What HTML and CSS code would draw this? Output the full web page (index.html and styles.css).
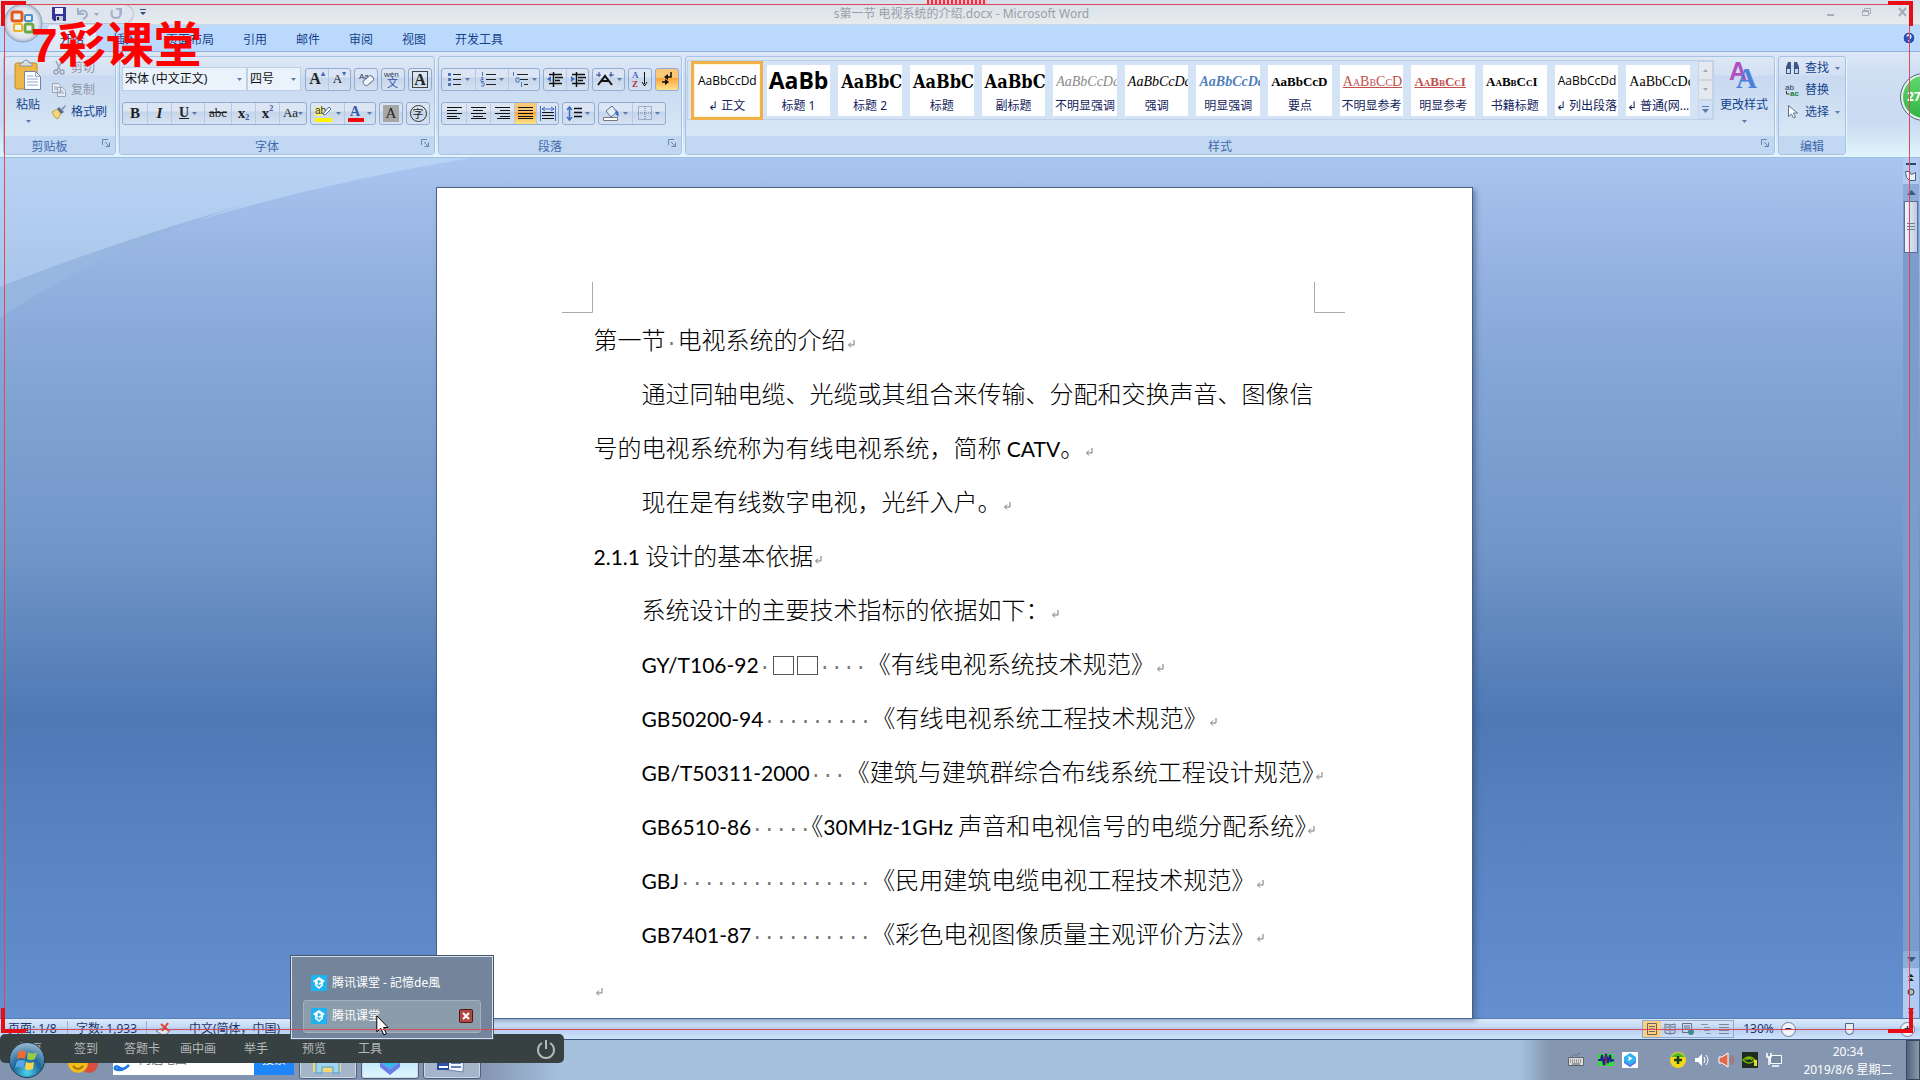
FILE: index.html
```html
<!DOCTYPE html>
<html lang="zh-CN">
<head>
<meta charset="utf-8">
<title>s第一节 电视系统的介绍.docx - Microsoft Word</title>
<link rel="stylesheet" href="styles.css">
</head>
<body>
<svg class="defs" width="0" height="0" aria-hidden="true">
  <defs>
    <symbol id="ret" viewBox="0 0 8 9"><path d="M7 0v5H2M4 2.500L1.500 5L4 7.500" fill="none" stroke="#777" stroke-width="1"/></symbol>
    <symbol id="down" viewBox="0 0 5 3"><path d="M0 0h5L2.500 3z" fill="#5b7ba8"/></symbol>
    <symbol id="launch" viewBox="0 0 8 8"><path d="M.5 6V.5H6M3 3l4 4M7.500 3.500v4h-4" fill="none" stroke="#6685b0"/></symbol>
    <symbol id="ke" viewBox="0 0 16 16"><path d="M0 0h16v16H0z" fill="#20b3f2"/><path d="M8 2l6 4-2 1.500v3L8 14l-4-3.500v-3L2 6z" fill="#fff"/><path d="M7 5l3 1.700L7 8.500zM5.500 9.500L8 11.500l2.500-2" fill="#20b3f2" stroke="#20b3f2" stroke-width=".6"/></symbol>
  </defs>
</svg>

<header class="title">
  <div class="qat">
    <button aria-label="保存"><svg width="14" height="14"><path d="M0 0h14v14H2L0 12z" fill="#35349b"/><path d="M3 1h8v6H3z" fill="#eef"/><path d="M4 9h7v5H4z" fill="#c8c8dc"/><path d="M5 10h2v3H5z" fill="#223"/></svg></button>
    <button aria-label="撤消"><svg width="24" height="14"><path d="M2 1v6h6M2 7q5-6 8-2t-3 7" fill="none" stroke="#a2b0c8" stroke-width="2"/><path d="M18 6h5l-2.500 3z" fill="#9aa7bd"/></svg></button>
    <button aria-label="恢复"><svg width="12" height="14"><path d="M2 3q-2 8 4 8t4-8M6 2h5v5" fill="none" stroke="#a2b0c8" stroke-width="2"/></svg></button>
  </div>
  <button class="qmore" aria-label="自定义快速访问工具栏"><svg width="6" height="6"><path d="M0 0h6v1H0zM0 3h6L3 6z" fill="#35507c"/></svg></button>
  <h1>s第一节 电视系统的介绍.docx - Microsoft Word</h1>
  <div class="wins">
    <button aria-label="最小化"><svg width="8" height="8"><path d="M0 6h7v2H0z" fill="#a4adb8"/></svg></button>
    <button aria-label="还原"><svg width="9" height="8"><path d="M2.500 2V.5h6v5H7M.5 2.500h6v5h-6zM.5 3.500h6" fill="none" stroke="#a4adb8"/></svg></button>
    <button aria-label="关闭"><svg width="9" height="9"><path d="M1 0l7 8M8 0L1 8" stroke="#a4adb8" stroke-width="2"/></svg></button>
  </div>
</header>

<nav class="tabs">
  <a href="#" class="on">开始</a><a href="#">插入</a><a href="#">页面布局</a><a href="#">引用</a><a href="#">邮件</a><a href="#">审阅</a><a href="#">视图</a><a href="#">开发工具</a>
  <button class="help" aria-label="帮助"><svg width="14" height="14"><circle cx="7" cy="7" r="6" fill="#2b52bd" stroke="#e7f0fc" stroke-width="1"/><path d="M5 5.500Q5 4 7 4t2 1.500T7 8M7 9v1.500" stroke="#fff" fill="none" stroke-width="1.300"/></svg></button>
</nav>

<section class="ribbon">
  <div class="group clip">
    <div class="body">
      <button class="big"><svg width="28" height="31"><rect x="1" y="3" width="22" height="26" rx="2" fill="#efb545" stroke="#c18b2c"/><path d="M6 5V3h3q0-3 3-3t3 3h3v3H6z" fill="#d9dee4" stroke="#7b8696" stroke-width=".8"/><path d="M10.500 11.500h11l5 5v13h-16z" fill="#fff" stroke="#6a84b0"/><path d="M21.500 11.500v5h5M13 16h6M13 19h11M13 22h11M13 25h11" stroke="#8ba6d0" fill="none"/></svg><span>粘贴</span><svg class="dn"><use href="#down"/></svg></button>
      <div class="stack">
        <button class="dim"><svg width="14" height="14"><path d="M4 0l4 9M10 0L5 9" stroke="#9aa5b8" stroke-width="1.500"/><circle cx="4" cy="11" r="2" fill="none" stroke="#9aa5b8" stroke-width="1.500"/><circle cx="10" cy="11" r="2" fill="none" stroke="#9aa5b8" stroke-width="1.500"/></svg>剪切</button>
        <button class="dim"><svg width="14" height="14"><path d="M.5.5h6l2 2v7h-8zM5.500 4.500h5l3 3v6h-8z" fill="#e6ebf3" stroke="#98a5bb"/><path d="M2 4h3M2 6h3M7 8h4M7 10h5" stroke="#98a5bb"/></svg>复制</button>
        <button><svg width="14" height="14"><path d="M0 7l5-3 4 4-3 6q-4-1-6-7z" fill="#f3d775" stroke="#b49435" stroke-width=".8"/><path d="M5 4l2-2 5 5-3 2z" fill="#5d6c8c"/><path d="M9 4l4-4 1 1-3 4z" fill="#8796b4"/></svg>格式刷</button>
      </div>
    </div>
    <h2>剪贴板</h2><button class="launch" aria-label="剪贴板选项"><svg width="8" height="8"><use href="#launch"/></svg></button>
  </div>

  <div class="group font">
    <div class="body rows">
      <div class="row">
        <span class="combo"><select class="face" aria-label="字体"><option>宋体 (中文正文)</option></select><svg class="dn"><use href="#down"/></svg></span><span class="combo"><select class="size" aria-label="字号"><option>四号</option></select><svg class="dn"><use href="#down"/></svg></span>
        <div class="box sp"><button class="w22 ser l">A<i class="up">▴</i></button><button class="w22 ser">A<i class="up">▾</i></button></div>
        <div class="box"><button class="w22" aria-label="清除格式"><svg width="16" height="16"><text x="1" y="8" class="t8">Aa</text><rect x="5" y="7" width="11" height="6" rx="2" transform="rotate(-40 10 10)" fill="#f2f4f8" stroke="#6d7d9c"/></svg></button></div>
        <div class="box"><button class="w22" aria-label="拼音指南"><svg width="18" height="18"><text x="0" y="7" class="t8">wén</text><text x="3" y="17" class="t11">文</text></svg></button></div>
        <div class="box"><button class="w22 ser l"><span class="frame">A</span></button></div>
      </div>
      <div class="row">
        <div class="box"><button class="w24 ser b">B</button><button class="w24 ser it">I</button><button class="w34 ser un"><u>U</u><svg class="dn"><use href="#down"/></svg></button><button class="w26 ser"><s>abc</s></button><button class="w24 ser b">x<sub>2</sub></button><button class="w24 ser b">x<sup>2</sup></button><button class="w26 ser">Aa<svg class="dn"><use href="#down"/></svg></button></div>
        <div class="box"><button class="w34" aria-label="突出显示"><svg width="18" height="17"><path d="M0 2h8v9H0z" fill="#f6f178"/><text x="0" y="9" class="t10">ab</text><path d="M8 9l6-7 2 2-6 6z" fill="#fff" stroke="#58719f"/><path d="M0 13h17v4H0z" fill="#fff500"/></svg><svg class="dn"><use href="#down"/></svg></button><button class="w30" aria-label="字体颜色"><svg width="16" height="17"><text x="2" y="11" class="ta">A</text><path d="M0 13h16v4H0z" fill="#f00b0b"/></svg><svg class="dn"><use href="#down"/></svg></button></div>
        <div class="box"><button class="w22 ser"><span class="shade">A</span></button></div>
        <div class="box"><button class="w22"><span class="ring">字</span></button></div>
      </div>
    </div>
    <h2>字体</h2><button class="launch" aria-label="字体选项"><svg width="8" height="8"><use href="#launch"/></svg></button>
  </div>

  <div class="group para">
    <div class="body rows">
      <div class="row">
        <div class="box">
          <button class="w34" aria-label="项目符号"><svg width="14" height="14"><path d="M5 2.500h8M5 7.500h8M5 12.500h8" stroke="#222"/><path d="M0 1h3v3H0zM0 6h3v3H0zM0 11h3v3H0z" fill="#4f76b8"/></svg><svg class="dn"><use href="#down"/></svg></button>
          <button class="w34" aria-label="编号"><svg width="15" height="14"><path d="M5 2.500h10M5 7.500h10M5 12.500h10" stroke="#222"/><path d="M1.500 0v4M0 5.500h2v2H0v2h3M0 11h3v3H0" fill="none" stroke="#4f76b8"/></svg><svg class="dn"><use href="#down"/></svg></button>
          <button class="w30" aria-label="多级列表"><svg width="17" height="15"><path d="M5 2.500h11M8 7.500h8M12 12.500h4" stroke="#222"/><path d="M1.500 0v4M4 6h3v4H4zM9.500 10v5" fill="none" stroke="#4f76b8"/></svg><svg class="dn"><use href="#down"/></svg></button>
        </div>
        <div class="box">
          <button class="w22" aria-label="减少缩进"><svg width="16" height="15"><path d="M2 2.500h13M8 5.500h8M8 8.500h5M2 11.500h13M6.500 0v15" stroke="#111" stroke-width="1.500"/><path d="M0 7l4-3v6z" fill="#3f6cc4"/></svg></button>
          <button class="w22" aria-label="增加缩进"><svg width="16" height="15"><path d="M2 2.500h13M8 5.500h8M8 8.500h5M2 11.500h13M6.500 0v15" stroke="#111" stroke-width="1.500"/><path d="M5 7L1 4v6z" fill="#3f6cc4"/></svg></button>
        </div>
        <div class="box"><button class="w30" aria-label="中文版式"><svg width="18" height="14"><path d="M2 13l7-9 7 9M5 9h8" fill="none" stroke="#111" stroke-width="2"/><path d="M0 3h5M13 3h5M3 0v5M15 0v5" stroke="#23409a"/></svg><svg class="dn"><use href="#down"/></svg></button></div>
        <div class="box"><button class="w22" aria-label="排序"><svg width="16" height="16"><text x="0" y="7" class="t9">A</text><text x="0" y="16" class="t9 r">Z</text><path d="M12.500 1v12M10 11l2.500 4 2.500-4" stroke="#111" fill="none"/></svg></button></div>
        <div class="box hot"><button class="w22" aria-label="显示编辑标记"><svg width="12" height="14"><path d="M10 0v5H5M1 10h6" stroke="#111" fill="none" stroke-width="1.500"/><path d="M3 5l4-3v6zM8 10L4 7v6z" fill="#111"/></svg></button></div>
      </div>
      <div class="row">
        <div class="box">
          <button class="w24" aria-label="左对齐"><svg width="15" height="12"><path d="M0 .5h15M0 3.500h10M0 6.500h15M0 9.500h10M0 11.500h13" stroke="#111"/></svg></button>
          <button class="w24" aria-label="居中"><svg width="15" height="12"><path d="M0 .5h15M2 3.500h10M0 6.500h15M2 9.500h10M0 11.500h15" stroke="#111"/></svg></button>
          <button class="w24" aria-label="右对齐"><svg width="15" height="12"><path d="M0 .5h15M5 3.500h10M0 6.500h15M5 9.500h10M2 11.500h13" stroke="#111"/></svg></button>
          <button class="w22 on" aria-label="两端对齐"><svg width="15" height="12"><path d="M0 .5h15M0 3.500h15M0 6.500h15M0 9.500h15M0 11.500h15" stroke="#111"/></svg></button>
          <button class="w22" aria-label="分散对齐"><svg width="16" height="15"><path d="M2 6.500h12M2 9.500h12M2 12.500h12" stroke="#111"/><path d="M.5 0v15M15.500 0v15M2 3h12M5 1L2 3l3 2M11 1l3 2-3 2" stroke="#3f6cc4" fill="none"/></svg></button>
        </div>
        <div class="box"><button class="w30" aria-label="行距"><svg width="15" height="15"><path d="M7 2.500h8M7 6.500h8M7 10.500h8" stroke="#111" stroke-width="1.500"/><path d="M2.500 2v11M0 4l2.500-3L5 4M0 11l2.500 3L5 11" stroke="#3f6cc4" fill="none" stroke-width="1.500"/></svg><svg class="dn"><use href="#down"/></svg></button></div>
        <div class="box">
          <button class="w34" aria-label="底纹"><svg width="17" height="16"><path d="M3 6l6-5 5 6-6 5z" fill="#e9eef7" stroke="#5c6f91"/><path d="M13 5q4 2 2 7l-3-4z" fill="#3f6cc4"/><path d="M.5 12.500h14v3H.5z" fill="#fff" stroke="#777"/></svg><svg class="dn"><use href="#down"/></svg></button>
          <button class="w34" aria-label="边框"><svg width="14" height="14"><path d="M.5.5h13v13H.5zM7 0v14M0 7h14" fill="none" stroke="#6a7b98" stroke-dasharray="1 1"/></svg><svg class="dn"><use href="#down"/></svg></button>
        </div>
      </div>
    </div>
    <h2>段落</h2><button class="launch" aria-label="段落选项"><svg width="8" height="8"><use href="#launch"/></svg></button>
  </div>

  <div class="group styles">
    <div class="body">
      <div class="gallery">
        <button class="tile sel"><b class="s-n">AaBbCcDd</b><span>↲ 正文</span></button>
        <button class="tile"><b class="s-h1">AaBb</b><span>标题 1</span></button>
        <button class="tile"><b class="s-h2">AaBbC</b><span>标题 2</span></button>
        <button class="tile"><b class="s-h2">AaBbC</b><span>标题</span></button>
        <button class="tile"><b class="s-h2">AaBbC</b><span>副标题</span></button>
        <button class="tile"><b class="s-i gray">AaBbCcDd</b><span>不明显强调</span></button>
        <button class="tile"><b class="s-i">AaBbCcDd</b><span>强调</span></button>
        <button class="tile"><b class="s-i blue">AaBbCcDd</b><span>明显强调</span></button>
        <button class="tile"><b class="s-b">AaBbCcD</b><span>要点</span></button>
        <button class="tile"><b class="s-c red">AaBbCcD</b><span>不明显参考</span></button>
        <button class="tile"><b class="s-c red bold">AaBbCcI</b><span>明显参考</span></button>
        <button class="tile"><b class="s-c bold">AaBbCcI</b><span>书籍标题</span></button>
        <button class="tile"><b class="s-n">AaBbCcDd</b><span>↲ 列出段落</span></button>
        <button class="tile"><b class="s-s">AaBbCcDd</b><span>↲ 普通(网...</span></button>
        <div class="gscroll"><button aria-label="上一行"><svg width="5" height="3"><path d="M0 3h5L2.500 0z" fill="#9aa9c0"/></svg></button><button aria-label="下一行"><svg width="5" height="3"><path d="M0 0h5L2.500 3z" fill="#9aa9c0"/></svg></button><button class="lit" aria-label="其他"><svg width="7" height="7"><path d="M0 0h7v1H0zM0 3h7L3.500 7z" fill="#5b7ba8"/></svg></button></div>
      </div>
      <button class="big chg"><svg width="30" height="31"><text x="0" y="20" class="a1">A</text><text x="7" y="28" class="a2">A</text></svg><span>更改样式</span><svg class="dn"><use href="#down"/></svg></button>
    </div>
    <h2>样式</h2><button class="launch" aria-label="样式选项"><svg width="8" height="8"><use href="#launch"/></svg></button>
  </div>

  <div class="group edit">
    <div class="body">
      <div class="stack">
        <button><svg width="15" height="14"><path d="M1 6l2-5h3v12H1zM9 1h3l2 5v7H9z" fill="#3d5688"/><path d="M6 4h3v4H6zM2 8h3v4H2zM10 8h3v4h-3z" fill="#c9d8f0"/></svg>查找<svg class="dn"><use href="#down"/></svg></button>
        <button><svg width="15" height="14"><text x="0" y="7" class="t8">ab</text><text x="5" y="13" class="t8 g">ac</text><path d="M1.500 8v3h3" stroke="#333" fill="none"/></svg>替换</button>
        <button><svg width="15" height="14"><path d="M3.500.5v11l3-2.500 2 4 2-1-2-4h4z" fill="#fff" stroke="#5c6f91"/></svg>选择<svg class="dn"><use href="#down"/></svg></button>
      </div>
    </div>
    <h2>编辑</h2>
  </div>
</section>

<main class="work">
  <svg class="swoosh" width="470" height="162" aria-hidden="true"><defs><linearGradient id="sw" x1="0" y1="0" x2="0" y2="1"><stop offset="0" stop-color="#b9d3f4"/><stop offset="1" stop-color="#a8c6ea"/></linearGradient></defs><path d="M0 0H470Q230 40 0 129z" fill="url(#sw)"/><path d="M0 129Q110 85 250 45Q110 86 0 160z" fill="#97b6e0"/></svg>
  <article class="page">
    <svg class="mark ml" width="31" height="31"><path d="M30.500 0v30.500H0" fill="none" stroke="#aaa"/></svg>
    <svg class="mark mr" width="31" height="31"><path d="M.5 0v30.500H31" fill="none" stroke="#aaa"/></svg>
    <p>第一节<i class="dots">·</i>电视系统的介绍<svg class="ret"><use href="#ret"/></svg></p>
    <p class="in">通过同轴电缆、光缆或其组合来传输、分配和交换声音、图像信号的电视系统称为有线电视系统，简称 <span class="lat">CATV</span>。<svg class="ret"><use href="#ret"/></svg></p>
    <p class="in">现在是有线数字电视，光纤入户。<svg class="ret"><use href="#ret"/></svg></p>
    <p><span class="lat">2.1.1</span> 设计的基本依据<svg class="ret"><use href="#ret"/></svg></p>
    <p class="in">系统设计的主要技术指标的依据如下：<svg class="ret"><use href="#ret"/></svg></p>
    <p class="in one"><span class="lat">GY/T106-92</span><i class="dots">·</i><i class="sq"></i><i class="sq"></i><i class="dots">····</i>《有线电视系统技术规范》<svg class="ret"><use href="#ret"/></svg></p>
    <p class="in one"><span class="lat">GB50200-94</span><i class="dots">·········</i>《有线电视系统工程技术规范》<svg class="ret"><use href="#ret"/></svg></p>
    <p class="in one"><span class="lat">GB/T50311-2000</span><i class="dots">···</i>《建筑与建筑群综合布线系统工程设计规范<span class="half">》</span><svg class="ret"><use href="#ret"/></svg></p>
    <p class="in one"><span class="lat">GB6510-86</span><i class="dots">·····</i><span class="half">《</span><span class="lat">30MHz-1GHz</span> 声音和电视信号的电缆分配系统<span class="half">》</span><svg class="ret"><use href="#ret"/></svg></p>
    <p class="in one"><span class="lat">GBJ</span><i class="dots">················</i>《民用建筑电缆电视工程技术规范》<svg class="ret"><use href="#ret"/></svg></p>
    <p class="in one"><span class="lat">GB7401-87</span><i class="dots">··········</i>《彩色电视图像质量主观评价方法》<svg class="ret"><use href="#ret"/></svg></p>
    <p><svg class="ret"><use href="#ret"/></svg></p>
  </article>
  <aside class="vscroll">
    <svg width="16" height="26"><path d="M3 5h10v2H3z" fill="#2d4573"/><path d="M2.500 13.500h4l2 3 4-2v8h-6l-3-3z" fill="#eef3fa" stroke="#4c5d7c"/></svg>
    <div class="track">
      <button class="arr" aria-label="向上滚动"><svg width="9" height="5"><path d="M0 5h9L4.500 0z" fill="#3c5685"/></svg></button>
      <button class="thumb" aria-label="滚动条"><svg width="8" height="8"><path d="M0 .5h8M0 3.500h8M0 6.500h8" stroke="#6c7f9e"/></svg></button>
      <button class="arr end" aria-label="向下滚动"><svg width="9" height="5"><path d="M0 0h9L4.500 5z" fill="#3c5685"/></svg></button>
    </div>
    <svg width="16" height="50"><path d="M5 9l3-3 3 3zM5 13l3-3 3 3zM5 40h6l-3 3zM5 44h6l-3 3z" fill="#222"/><circle cx="8" cy="24" r="3" fill="#bbb" stroke="#333"/></svg>
  </aside>
</main>

<footer class="status">
  <span class="c1">页面: 1/8</span><span class="c2">字数: 1,933</span>
  <svg width="17" height="15"><path d="M1 9l7-3 7 3-6 5z" fill="#dfe5ee" stroke="#72809a"/><path d="M6 2l8 7M13 1L7 9" stroke="#e5432c" stroke-width="2"/></svg>
  <span class="c3">中文(简体，中国)</span>
  <div class="views">
    <button class="on" aria-label="页面视图"><svg width="12" height="12"><path d="M1.500.5h9v11h-9zM3 3.500h6M3 6h6M3 8.500h6" fill="none" stroke="#66655f"/></svg></button><button aria-label="阅读版式"><svg width="12" height="12"><path d="M1 1l5 1 5-1v9l-5 1-5-1zM6 2v9M2 4h3M2 7h3M7 4h3M7 7h3" fill="none" stroke="#66707f"/></svg></button><button aria-label="Web 版式"><svg width="12" height="12"><path d="M.5.5h9v9h-9zM2 3h6M2 5h6" fill="none" stroke="#66707f"/><circle cx="9" cy="9" r="3" fill="#3c8c8c"/></svg></button><button aria-label="大纲"><svg width="12" height="12"><path d="M1 1.500h7M4 4.500h6M4 7.500h6M6 10.500h5" stroke="#8a95a5"/></svg></button><button aria-label="草稿"><svg width="12" height="12"><path d="M1 1.500h10M1 4.500h10M1 7.500h10M1 10.500h10" stroke="#7c8898"/></svg></button>
  </div>
  <span class="pct">130%</span>
  <button class="rnd" aria-label="缩小">−</button>
  <input type="range" class="zoom" aria-label="显示比例" min="10" max="500" value="265">
  <button class="rnd" aria-label="放大">+</button>
</footer>

<div class="taskbar">
  <button class="orb" aria-label="开始菜单"><svg width="38" height="38"><defs><radialGradient id="og" cx=".5" cy=".85" r=".8"><stop offset="0" stop-color="#4fd3ef"/><stop offset=".5" stop-color="#1b6799"/><stop offset="1" stop-color="#8fb3cb"/></radialGradient></defs><circle cx="19" cy="19" r="17.500" fill="url(#og)" stroke="#20384f"/><path d="M10 11q4-3 8 0l-1 7q-4-2-8 0z" fill="#ee6a34"/><path d="M20 11q4 3 9 0l-2 7q-4 2-8 0z" fill="#9cc946"/><path d="M9 20q4-2 8 0l-2 7q-4-3-8 0z" fill="#5aa7e8"/><path d="M18 21q4 2 8 0l-1 7q-5 2-8 0z" fill="#fbd24a"/></svg></button>
  <svg class="balls" width="32" height="34"><circle cx="21" cy="24" r="9" fill="#d9503c"/><circle cx="10" cy="23" r="10" fill="#f2bd16"/><path d="M5 26q5 6 10 0" stroke="#a87608" fill="none" stroke-width="2"/></svg>
  <div class="search"><svg width="18" height="28"><path d="M16 20q-6 7-12 1M4 21q-3 1-2 3 7 3 14-4" stroke="#2179e8" fill="none" stroke-width="2.500"/></svg><input aria-label="搜索内容" value="内涵地图"><button>搜索</button></div>
  <div class="apps">
    <button class="app" aria-label="资源管理器"><svg width="34" height="34"><path d="M2 4h28v25H2z" fill="#f2d877"/><path d="M5 30V18q0-4 4-4h15q4 0 4 4v12h-6v-6H11v6z" fill="#9fd6f2" stroke="#4a9cc8"/></svg></button>
    <button class="app live" aria-label="腾讯课堂"><svg width="34" height="34"><path d="M7 12l10 6 10-6v7l-10 7-10-7z" fill="#35b8e8"/><path d="M7 19l10 7 10-7v5l-10 8-10-8z" fill="#6a7bea"/></svg></button>
    <button class="app" aria-label="Word"><svg width="34" height="34"><path d="M6 6h23l-1 23-22-3z" fill="#f4f7fd" stroke="#6881b3"/><path d="M2 12h12v15H2z" fill="#2a4d9e"/><path d="M16 20h10M16 24h10M5 16l2 8 2-6 2 6 1-8" stroke="#3657a8" fill="none" stroke-width="1.500"/><path d="M4 24h9" stroke="#fff" stroke-width="2"/></svg></button>
  </div>
  <div class="tray">
    <svg width="16" height="16"><path d="M.5 5.500h15v8H.5zM4 5q1-3 5-2l3-2" fill="#ddd" stroke="#5c6470"/><path d="M2 8h12M2 10h12" stroke="#555" stroke-dasharray="1 1"/><path d="M4 12h8" stroke="#555"/></svg>
    <svg width="16" height="16" class="g1"><path d="M0 2h16v12H0z" fill="#35dc3e"/><path d="M0 8h3l1-5 2 10 2-11 2 9 2-8 1 6 3-1" fill="none" stroke="#202090" stroke-width="2"/><path d="M8 3v10" stroke="#c22"/></svg>
    <svg width="16" height="16"><rect width="16" height="16" rx="1" fill="#fff"/><path d="M8 1l6 4v5l-6 5-6-5V5z" fill="#30b3f0"/><path d="M2 9l6 4 6-4v2l-6 4-6-4z" fill="#5974e8"/><path d="M6.500 4l4 2.500-4 2.500z" fill="#fff"/></svg>
    <svg width="16" height="16" class="g2"><circle cx="8" cy="8" r="8" fill="#f4d81b"/><path d="M1 5q7-8 14 0" fill="#4bb72c"/><path d="M8 4v8M4 8h8" stroke="#163e12" stroke-width="2.500"/></svg>
    <svg width="16" height="16"><path d="M1 6h3l4-4v12l-4-4H1z" fill="#fff"/><path d="M10 5q2 3 0 6M12 3q4 5 0 10" stroke="#fff" fill="none"/></svg>
    <svg width="16" height="16"><path d="M1 5h3l6-4v14l-6-4H1z" fill="#e2674a" stroke="#fff"/><path d="M12 5q2 3 0 6M14 3q3 5 0 10" stroke="#c65a45" fill="none"/></svg>
    <svg width="16" height="16"><path d="M0 0h16v16H0z" fill="#222b20"/><path d="M1 8q6-6 12 0-6 6-12 0zM4 8q3-3 6 0" fill="none" stroke="#76b900" stroke-width="1.500"/><path d="M12 8h3v6h-3z" fill="#e6d83a"/></svg>
    <svg width="16" height="16"><path d="M4.500 3.500h11v8h-11z" fill="#758ba5" stroke="#fff"/><path d="M6 14h7M1 1v4h4V1M3 5v8" stroke="#fff" fill="none" stroke-width="1.500"/></svg>
    <time datetime="2019-08-06T20:34"><span>20:34</span><span>2019/8/6 星期二</span></time>
    <button class="desk" aria-label="显示桌面"></button>
  </div>
</div>

<div class="menu">
  <button>首页</button><button>签到</button><button>答题卡</button><button>画中画</button><button>举手</button><button>预览</button><button>工具</button>
  <button class="power" aria-label="退出"><svg width="20" height="20"><path d="M6 4a8 8 0 1 0 8 0M10 1v9" fill="none" stroke="#b4b9ba" stroke-width="2"/></svg></button>
</div>

<div class="pop">
  <button><svg width="16" height="16"><use href="#ke"/></svg>腾讯课堂 - 記憶de風</button>
  <button class="hov"><svg width="16" height="16"><use href="#ke"/></svg>腾讯课堂<svg class="x" width="14" height="14"><rect x=".5" y=".5" width="13" height="13" rx="1" fill="#b04745" stroke="#4d1515"/><path d="M4 4l6 6M10 4l-6 6" stroke="#fff" stroke-width="2"/></svg></button>
</div>
<svg class="cursor" width="13" height="21"><path d="M.8.800v16l4-3.500 3 6.500 2.500-1-2.700-6.300H12z" fill="#fff" stroke="#000"/></svg>

<button class="office" aria-label="Office 按钮"><svg width="40" height="40"><defs><radialGradient id="ob"><stop offset="0" stop-color="#fff"/><stop offset=".8" stop-color="#dbe2ec"/><stop offset="1" stop-color="#a9b7cb"/></radialGradient></defs><circle cx="20" cy="20" r="19" fill="url(#ob)" stroke="#8fa1bb"/><g fill="none" stroke-width="3"><rect x="9" y="9" width="10" height="9" rx="2" stroke="#e35a1c"/><rect x="22" y="12" width="7" height="6" rx="1" stroke="#4a8fd0" stroke-width="2"/><rect x="11" y="21" width="8" height="7" rx="1" stroke="#f2b321" stroke-width="2"/><rect x="22" y="21" width="8" height="8" rx="2" stroke="#6aa943"/></g></svg></button>
<div class="brand">7彩课堂</div>
<div class="ball27">27</div>
<div class="capture" aria-hidden="true"><i class="tl"></i><i class="tr"></i><i class="bl"></i><i class="br"></i><i class="grip"></i></div>
</body>
</html>
```
FILE: styles.css
```css
* { box-sizing: border-box; }
body {
  margin: 0; height: 100vh; overflow: hidden; position: relative;
  display: flex; flex-direction: column;
  font: 12px/16px "Noto Sans", "Noto Sans CJK SC", sans-serif; color: #15428b;
}
button, select, input { font: inherit; color: inherit; border: 0; padding: 0; margin: 0; background: none; }
svg { flex: none; display: block; overflow: visible; }
h1, h2, p { margin: 0; font: inherit; }
i { font-style: normal; }
a { color: inherit; text-decoration: none; }
.defs { position: absolute; }
.dn { width: 5px; height: 3px; }

/* title bar and tabs */
.title { height: 25px; display: flex; align-items: center; background: linear-gradient(#d5dfea, #e8ebec); border-bottom: 1px solid #cdd9e6; color: #999fa6; }
.qat { display: flex; align-items: center; gap: 10px; height: 20px; margin: 3px 0 0 40px; padding: 0 12px; width: 94px; border: 1px solid #b6c1d1; border-left: 0; border-radius: 0 10px 10px 0; background: #dfe5ee; flex: none; }
.qmore { margin-left: 6px; }
.title h1 { flex: 1; text-align: center; padding: 3px 50px 0 0; line-height: 24px; }
.wins { display: flex; gap: 27px; padding-right: 13px; }
.tabs { height: 27px; display: flex; gap: 5px; align-items: stretch; padding: 0 4px 0 48px; background: #bbd9fd; border-bottom: 1px solid #8db2e3; }
.tabs a { padding: 0 12px; line-height: 30px; }
.tabs a.on { background: linear-gradient(#e3effc, #dce8f6); border-radius: 3px 3px 0 0; }
.help { margin-left: auto; }

/* ribbon */
.ribbon { height: 106px; display: flex; gap: 3px; padding: 4px 74px 2px 3px; background: linear-gradient(#dde8f6 0, #cfdff3 20px, #c9dbf2 70px, #e0f4fb 100%); border-bottom: 1px solid #9ebde0; box-shadow: inset 0 -2px #dff5fd; }
.group { position: relative; display: flex; flex-direction: column; border: 1px solid #a6c2e3; border-radius: 3px; background: linear-gradient(#dee8f5 0, #d3e0f3 18px, #c8d9f1 19px, #d7e7f5 80px); box-shadow: 1px 1px #edf5fc; }
.body { height: 79px; display: flex; }
.group h2 { height: 18px; line-height: 21px; text-align: center; color: #3e6aaa; background: #c2d8f2; padding-right: 20px; }
.launch { position: absolute; right: 5px; bottom: 7px; }
.clip { width: 113px; } .font { width: 316px; } .para { width: 244px; } .styles { flex: 1; min-width: 0; } .edit { width: 68px; }
.edit h2 { padding: 0; }
.big { display: flex; flex-direction: column; align-items: center; width: 48px; padding-top: 3px; }
.big span { margin: 6px 0 7px; white-space: nowrap; }
.stack { display: flex; flex-direction: column; }
.stack button { height: 22px; display: flex; align-items: center; gap: 5px; }
.stack .dn { margin-left: 1px; }
.dim { color: #8e97a6; }
.edit .stack { padding-left: 6px; }
.rows { flex-direction: column; padding: 10px 2px 0; gap: 10px; }
.row { display: flex; gap: 3px; height: 24px; align-items: center; }
.combo { position: relative; display: block; margin-right: -3px; }
.combo .dn { position: absolute; right: 5px; top: 11px; }
.combo + .box { margin-left: 4px; }
.combo select { appearance: none; height: 24px; border: 1px solid #bccfe8; background: #eaf2fc; color: #111; padding-left: 2px; }
.face { width: 125px; } .size { width: 54px; padding-left: 3px; }
.box { display: flex; height: 23px; border: 1px solid #93acd1; border-radius: 3px; background: linear-gradient(#dbe5f3 40%, #c5d5ea 41%, #d6e2f2); overflow: hidden; }
.box button { display: flex; align-items: center; justify-content: center; gap: 3px; }
.box button + button { border-left: 1px solid #b7c9e2; }
.w22 { width: 22px; } .w24 { width: 24px; } .w26 { width: 27px; } .w30 { width: 31px; } .w34 { width: 33px; }
.ser { font: 13px/20px "Liberation Serif", serif; color: #222; }
.ser.l { font-size: 16px; font-weight: 700; }
.ser.b { font-weight: 700; font-size: 15px; }
.ser.it { font-style: italic; font-weight: 700; font-size: 15px; }
.ser.un { font-weight: 700; font-size: 14px; }
.box .b, .box .w22.ser, .box .w26 { gap: 0; }
.ser sub, .ser sup { font-size: 8px; line-height: 8px; color: #3557a6; }
.ser sub { align-self: flex-end; padding-bottom: 2px; } .ser sup { align-self: flex-start; padding-top: 2px; }
.up { font-size: 8px; align-self: flex-start; line-height: 10px; color: #3f6cc4; }
.frame { border: 1px solid #444; width: 16px; line-height: 15px; }
.shade { background: #a6a6a6; width: 16px; line-height: 17px; font-size: 15px; }
.ring { border: 1px solid #333; border-radius: 50%; width: 17px; line-height: 15px; font-size: 11px; color: #222; }
.box.hot, .box .on { background: linear-gradient(#fbc778 40%, #fba63a 45%, #fde28a); }
.t8 { font: 8px "Liberation Sans"; fill: #26375a; } .t8.g { fill: #207a35; font-weight: 700; }
.t9 { font: 700 9px "Liberation Serif"; fill: #3f6cc4; } .t9.r { fill: #b03048; }
.t10 { font: 10px "Liberation Sans"; fill: #333; }
.t11 { font: 11px "Noto Sans CJK SC"; fill: #3150a5; }
.ta { font: 700 14px "Liberation Serif"; fill: #2f58a8; }
.a1 { font: 700 25px "Liberation Sans"; fill: #b04fc0; } .a2 { font: 700 29px "Liberation Serif"; fill: #4a82d8; }

.gallery { flex: 1; min-width: 0; height: 60px; margin: 3px 0 0 1px; border: 1px solid #bdd0ea; display: flex; gap: 8px; padding: 4px 0 3px 7px; background: #d5e3f7; }
.tile { flex: 1 1 0; min-width: 0; height: 51px; background: #fff; display: flex; flex-direction: column; overflow: hidden; color: #14245e; }
.tile b { font-weight: 400; height: 32px; line-height: 32px; padding-left: 3px; width: 100%; text-align: left; overflow: hidden; color: #000; white-space: nowrap; }
.tile span { width: 100%; text-align: center; white-space: nowrap; line-height: 18px; }
.sel { box-shadow: 0 0 0 1px #fff6d8, 0 0 0 4px #f1b04a; }
.tile .s-n { font: 12px/32px "Open Sans", sans-serif; }
.tile .s-h1 { font: 700 23px/30px "Open Sans", sans-serif; padding-left: 2px; }
.tile .s-h2 { font: 700 18px/34px "DejaVu Serif Condensed", "Liberation Serif", serif; }
.s-i { font: italic 14px "Liberation Serif", serif; }
.tile .s-b { font: 700 13px/34px "Liberation Serif", serif; }
.tile .s-c { font: 14px/34px "Liberation Serif", serif; font-variant: small-caps; }
.tile .s-s { font: 14px/34px "Liberation Serif", serif; }
.tile .s-i { line-height: 34px; }
.tile .bold { font-weight: 700; font-size: 13px; }
.tile .gray { color: #8a8a8a; } .tile .blue { color: #4f81bd; font-weight: 700; }
.tile .red { color: #c0504d; text-decoration: underline; }
.gscroll { width: 15px; margin: -4px 0 -3px; display: flex; flex-direction: column; }
.gscroll button { flex: 1; display: flex; align-items: center; justify-content: center; background: #e5e9ef; border: 1px solid #cbd6e5; }
.gscroll .lit { background: #cfe0f7; }
.chg { width: 60px; }

/* document */
.work { flex: 1; min-height: 0; position: relative; display: flex; padding-left: 5px; background: linear-gradient(#a9c6f2 0, #98b5e3 90px, #84a6d6 210px, #7296c8 390px, #4e79b5 560px, #567fbd 640px, #6490cf 100%); }
.swoosh { position: absolute; left: 0; top: 0; }
.page { position: relative; width: 1037px; margin: 29px auto 0; padding: 124px 155px 0 157px; background: #fff; border: 1px solid #4c5f7d; border-bottom: 0; box-shadow: 3px 3px 5px #33507c80; overflow: hidden; font: 300 24px/54px "Noto Sans CJK SC", sans-serif; color: #000; text-spacing-trim: space-all; }
.mark { position: absolute; top: 94px; }
.ml { left: 125px; } .mr { right: 127px; }
.page p { min-height: 54px; }
.page .in { text-indent: 48px; }
.page .one { white-space: nowrap; }
.page .in > * { text-indent: 0; }
.lat { font: 400 21px/24px Lato, sans-serif; }
.dots { font: 20px/24px "Liberation Mono", monospace; color: #777; }
.half { font-feature-settings: "halt"; }
.ret { display: inline-block; width: 8px; height: 9px; margin-left: 1px; }
.sq { display: inline-block; width: 21px; height: 19px; margin: 0 1px 0 2px; border: 1px solid #555; vertical-align: -2px; }
.vscroll { width: 16px; margin-right: 1px; display: flex; flex-direction: column; background: #b3cbf0; }
.track { flex: 1; display: flex; flex-direction: column; background: #7c9ccb; }
.arr { height: 17px; display: grid; place-items: center; background: #8eacd8; }
.arr.end { margin-top: auto; }
.thumb { height: 52px; margin: 0 1px; display: grid; place-items: center; border: 1px solid #56709b; background: linear-gradient(90deg, #f0f5fb, #bccbe0); }

.status { height: 22px; flex: none; display: flex; align-items: center; padding: 0 1px 0 8px; color: #1c3568; border-top: 1px solid #5c7eb0; border-bottom: 1px solid #3d5680; background: linear-gradient(#dbe8fa, #c6dbf7 40%, #b3cdf0 45%, #d0e3fb); }
.status > span { white-space: nowrap; }
.c1 { width: 60px; border-right: 1px solid #96b1d8; margin-right: 8px; } .c2 { width: 71px; border-right: 1px solid #96b1d8; margin-right: 8px; } .c3 { width: 116px; padding-left: 17px; }
.views { margin-left: auto; display: flex; border: 1px solid #8ea9cf; }
.views button { width: 18px; height: 16px; display: grid; place-items: center; }
.views .on { background: #fbd083; }
.pct { width: 41px; text-align: center; margin-left: 4px; }
.rnd { width: 15px; height: 15px; line-height: 12px; margin: 0 4px; border: 1px solid #6f7f98; border-radius: 50%; background: #f0f4fa; font-weight: 700; }
.zoom { appearance: none; width: 96px; height: 14px; }
.zoom::-webkit-slider-thumb { appearance: none; width: 9px; height: 12px; background: #e7edf6; border: 1px solid #4f668e; border-radius: 0 0 5px 5px; }
.pct + .rnd { margin-left: 2px; }

.taskbar { height: 40px; flex: none; display: flex; background: linear-gradient(90deg, #8394b0 0, #8394b0 480px, #a4c0dd 560px, #a4c0dd calc(100% - 400px), #8496b0 calc(100% - 370px), #8496b0); }
.orb { position: relative; z-index: 3; margin-left: 8px; width: 38px; }
.balls { margin-left: 22px; }
.search { display: flex; margin: 5px 5px 5px 13px; width: 181px; background: #fff; overflow: hidden; }
.search input { flex: 1; min-width: 0; padding-left: 8px; color: #666; }
.search button { width: 40px; background: #1f86f8; color: #fff; }
.apps { display: flex; gap: 4px; }
.app { width: 58px; height: 39px; display: grid; place-items: center; border: 1px solid #4d6078; border-radius: 3px; background: #a4b4c9; box-shadow: inset 0 0 0 1px #ccd8e6; }
.live { background: linear-gradient(#9edaf5, #dff6fe); }
.tray { margin-left: auto; display: flex; align-items: center; gap: 8px; color: #fff; }
.g1 { margin-left: 6px; } .g2 { margin-left: 24px; }
.tray time { width: 116px; display: flex; flex-direction: column; text-align: center; gap: 2px; padding-top: 1px; }
.desk { width: 14px; height: 40px; margin-left: -8px; background: linear-gradient(90deg, #51647b, #8a9aac); border: 1px solid #38475a; }

/* floating windows */
.menu { position: absolute; left: 0; bottom: 17px; width: 564px; height: 29px; display: flex; align-items: center; padding: 0 8px 0 18px; border-radius: 5px; background: #384142; color: #b4b9ba; z-index: 2; }
.menu button { margin-right: 32px; width: 24px; white-space: nowrap; }
.menu button:nth-child(2) { margin-right: 26px; }
.menu button:nth-child(3), .menu button:nth-child(4) { width: 36px; margin-right: 20px; }
.menu button:nth-child(4) { margin-right: 28px; }
.menu button:nth-child(5), .menu button:nth-child(6) { margin-right: 34px; }
.menu button:nth-child(6) { margin-right: 32px; }
.menu .power { margin: 0 0 0 auto; width: 20px; }
.pop { position: absolute; z-index: 3; left: 291px; bottom: 41px; width: 202px; height: 83px; padding: 9px 11px 5px; border: 1px solid #d6e0ea; outline: 1px solid #46566d; background: #73859a; color: #fff; display: flex; flex-direction: column; }
.pop button { flex: 1; display: flex; align-items: center; gap: 5px; padding: 0 7px; border: 1px solid transparent; }
.pop .hov { background: #8b9cab; border-color: #a5b2be; border-radius: 3px; }
.pop .x { margin-left: auto; }
.cursor { position: absolute; z-index: 4; left: 376px; bottom: 44px; }
.office { position: absolute; left: 3px; top: 3px; }
.brand { position: absolute; left: 31px; top: 22px; font: 700 48px/48px "Liberation Sans", "Noto Sans CJK SC", sans-serif; color: #f00; }
.ball27 { position: absolute; right: -27px; top: 74px; width: 46px; height: 46px; border-radius: 50%; border: 2px solid #e8f4e8; outline: 1px solid #568; background: linear-gradient(#64d672, #2fb544); color: #fff; font-weight: 700; line-height: 42px; padding-left: 4px; }
.capture { position: absolute; z-index: 5; inset: 4px 10px 50px 4px; border: 1px solid #e0485a; pointer-events: none; }
.capture i { position: absolute; width: 25px; height: 25px; border: 0 solid #e80c14; }
.capture .tl { left: -4px; top: -4px; border-width: 4px 0 0 4px; }
.capture .tr { right: -4px; top: -4px; border-width: 4px 4px 0 0; }
.capture .bl { left: -4px; bottom: -4px; border-width: 0 0 4px 4px; }
.capture .br { right: -4px; bottom: -4px; border-width: 0 4px 4px 0; }
.capture .grip { left: 50%; top: -5px; width: 60px; height: 4px; margin-left: -30px; border: 0; background: repeating-linear-gradient(90deg, #e33 0 2px, #fbd 2px 4px); }
```
